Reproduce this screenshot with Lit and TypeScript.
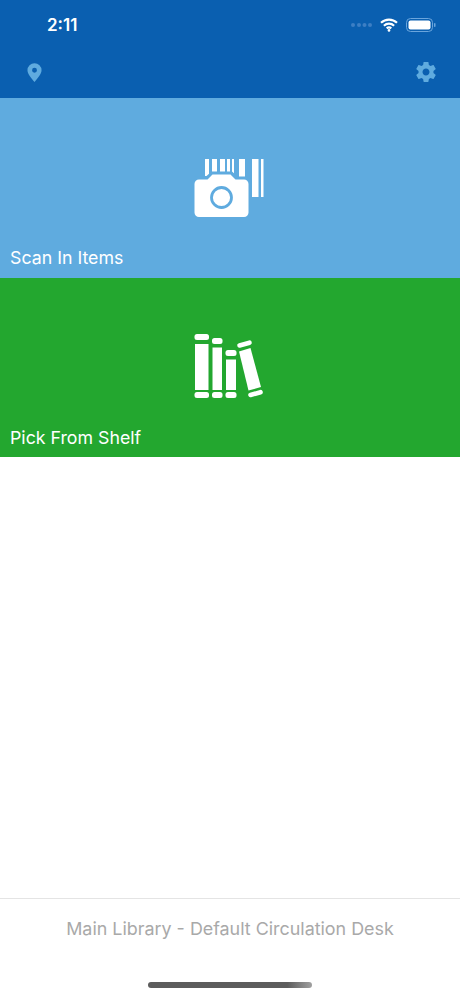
import {LitElement, html, css, svg} from 'lit';
import {customElement} from 'lit/decorators.js';

const cameraIcon = svg`
  <g fill="#fff">
    <rect x="25" y="14" width="4" height="17"/>
    <rect x="32" y="14" width="5" height="17"/>
    <rect x="40" y="14" width="5" height="17"/>
    <rect x="47" y="14" width="3" height="17"/>
    <rect x="52" y="14" width="2" height="20"/>
    <rect x="59" y="14" width="6" height="21"/>
    <rect x="72" y="14" width="6.5" height="38"/>
    <rect x="81" y="14" width="2.5" height="38"/>
  </g>
  <path d="M26 31.5 L31.5 26.5 H52 L57.5 31.5 H66 A6 6 0 0 1 72 37.5 V75 H10 V37.5 A6 6 0 0 1 16 31.5 Z" fill="#5fabdf"/>
  <path d="M27.5 34.5 L32.5 29.5 H50.5 L55.5 34.5 H64 A4.5 4.5 0 0 1 68.5 39 V67.5 A4.5 4.5 0 0 1 64 72 H19 A4.5 4.5 0 0 1 14.5 67.5 V39 A4.5 4.5 0 0 1 19 34.5 Z" fill="#fff"/>
  <circle cx="41.5" cy="52.5" r="10" fill="none" stroke="#5fabdf" stroke-width="2.8"/>
`;

const booksIcon = svg`
  <g fill="#fff">
    <rect x="14.5" y="9" width="14.5" height="6" rx="2.5"/>
    <rect x="15" y="19" width="13.5" height="46"/>
    <rect x="14.5" y="67" width="14.5" height="6" rx="2.5"/>
    <rect x="32" y="13" width="10.5" height="6" rx="2.5"/>
    <rect x="32.5" y="22.5" width="9.5" height="42.5"/>
    <rect x="32" y="67" width="10.5" height="6" rx="2.5"/>
    <rect x="45.5" y="25" width="11" height="6" rx="2.5"/>
    <rect x="46" y="34.5" width="10" height="30.5"/>
    <rect x="45.5" y="67" width="11" height="6" rx="2.5"/>
    <path d="M59 26.5 L70.5 23 L81 62 L68.5 65.5 Z"/>
  </g>
  <g stroke="#fff" stroke-width="4.6" stroke-linecap="round">
    <line x1="59.5" y1="20.5" x2="69.5" y2="17.7"/>
    <line x1="70.5" y1="70" x2="80.5" y2="67.2"/>
  </g>
`;

@customElement('app-root')
export class AppRoot extends LitElement {
  static styles = css`
    :host {
      display: flex;
      flex-direction: column;
      height: 996px;
      background: #fff;
      font-family: Inter, "Liberation Sans", sans-serif;
      overflow: hidden;
    }
    .header {
      height: 98px;
      box-sizing: border-box;
      background: #0a5fb0;
      display: flex;
      flex-direction: column;
    }
    .status {
      height: 50px;
      display: flex;
      align-items: center;
      justify-content: space-between;
      padding: 0 24px 0 47px;
    }
    .time {
      color: #fff;
      font-size: 17px;
      font-weight: 600;
    }
    .status-right {
      display: flex;
      align-items: center;
      gap: 8px;
    }
    .nav {
      display: flex;
      justify-content: space-between;
      align-items: center;
      padding: 10px 22px 0 27px;
    }
    svg {
      display: block;
    }
    .tile {
      height: 180px;
      box-sizing: border-box;
      display: flex;
      flex-direction: column;
      color: #fff;
      padding-top: 47px;
    }
    .tile.green {
      height: 179px;
      background: #23a72f;
    }
    .tile.blue {
      background: #5fabdf;
    }
    .tile svg {
      align-self: center;
    }
    .label {
      margin: 17px 0 0 10px;
      font-size: 17.75px;
      line-height: 22px;
    }
    .spacer {
      flex: 1;
    }
    .footer {
      height: 98px;
      box-sizing: border-box;
      border-top: 1px solid #e4e4e4;
      display: flex;
      flex-direction: column;
      align-items: center;
      color: #a9a9a9;
      font-size: 17.9px;
      line-height: 22px;
      padding-top: 19px;
    }
    .home {
      width: 164px;
      height: 6px;
      margin-top: 42px;
      border-radius: 3px;
      background: linear-gradient(90deg, #5c5c5c 0%, #5c5c5c 85%, #a0a0a0 100%);
    }
  `;

  render() {
    return html`
      <div class="header">
        <div class="status">
          <span class="time">2:11</span>
          <div class="status-right">
            <svg width="21" height="4" viewBox="0 0 21 4" fill="#3d7fc4">
              <circle cx="2" cy="2" r="2"/><circle cx="8" cy="2" r="2"/>
              <circle cx="13.5" cy="2" r="2"/><circle cx="19" cy="2" r="2"/>
            </svg>
            <svg width="18" height="14" viewBox="0 0 18 14" fill="none" stroke="#fff" stroke-width="2.2">
              <path d="M1 4.8 A11.5 11.5 0 0 1 17 4.8"/>
              <path d="M3.9 7.7 A7.5 7.5 0 0 1 14.1 7.7"/>
              <path d="M6.7 10.4 A3.6 3.6 0 0 1 11.3 10.4"/>
              <circle cx="9" cy="12.4" r="1.3" fill="#fff" stroke="none"/>
            </svg>
            <svg width="30" height="14" viewBox="0 0 30 14">
              <rect x="0.5" y="0.5" width="26" height="13" rx="4" fill="none" stroke="#6ba5dc"/>
              <rect x="2.5" y="2.5" width="22" height="9" rx="2" fill="#fff"/>
              <rect x="28" y="5" width="1.5" height="4" rx="0.7" fill="#6ba5dc"/>
            </svg>
          </div>
        </div>
        <div class="nav">
          <svg width="15" height="21" viewBox="0 0 16 21">
            <path fill-rule="evenodd" fill="#5fabdf" d="M8 0.5 A7.5 7.5 0 0 1 15.5 8 C15.5 12 11 17 8 20.5 C5 17 0.5 12 0.5 8 A7.5 7.5 0 0 1 8 0.5 Z M8 5.5 A2.6 2.6 0 1 0 8 10.7 A2.6 2.6 0 1 0 8 5.5 Z"/>
          </svg>
          <svg width="24" height="24" viewBox="0 0 24 24">
            <path fill="#5fabdf" d="M19.43 12.98c.04-.32.07-.64.07-.98s-.03-.66-.07-.98l2.11-1.65c.19-.15.24-.42.12-.64l-2-3.46c-.12-.22-.39-.3-.61-.22l-2.49 1c-.52-.4-1.08-.73-1.69-.98l-.38-2.65C14.46 2.18 14.25 2 14 2h-4c-.25 0-.46.18-.49.42l-.38 2.65c-.61.25-1.17.59-1.69.98l-2.49-1c-.23-.09-.49 0-.61.22l-2 3.46c-.13.22-.07.49.12.64l2.11 1.65c-.04.32-.07.65-.07.98s.03.66.07.98l-2.11 1.65c-.19.15-.24.42-.12.64l2 3.46c.12.22.39.3.61.22l2.49-1c.52.4 1.08.73 1.69.98l.38 2.65c.03.24.24.42.49.42h4c.25 0 .46-.18.49-.42l.38-2.65c.61-.25 1.17-.59 1.69-.98l2.49 1c.23.09.49 0 .61-.22l2-3.46c.12-.22.07-.49-.12-.64l-2.11-1.65zM12 15.5c-1.93 0-3.5-1.57-3.5-3.5s1.57-3.5 3.5-3.5 3.5 1.57 3.5 3.5-1.57 3.5-3.5 3.5z"/>
          </svg>
        </div>
      </div>
      <div class="tile blue">
        <svg width="100" height="85" viewBox="0 0 100 85">${cameraIcon}</svg>
        <div class="label">Scan In Items</div>
      </div>
      <div class="tile green">
        <svg width="100" height="85" viewBox="0 0 100 85">${booksIcon}</svg>
        <div class="label">Pick From Shelf</div>
      </div>
      <div class="spacer"></div>
      <div class="footer">
        <div>Main Library - Default Circulation Desk</div>
        <div class="home"></div>
      </div>
    `;
  }
}
